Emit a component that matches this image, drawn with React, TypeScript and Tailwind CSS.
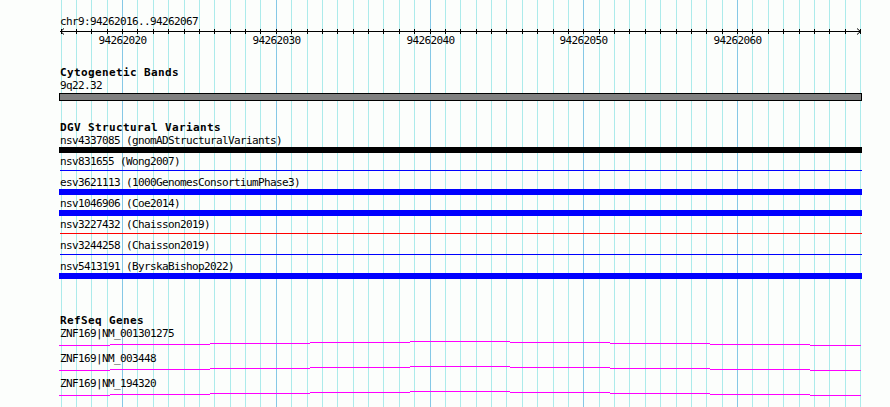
const STEP = 15.375;
const cols = Array.from({ length: 53 }, (_, i) => Math.round(60.5 + i * STEP));
const majors = [4, 14, 24, 34, 44];
const FONT = "'DejaVu Sans Mono', monospace";

const variants = [
	{ label: "nsv4337085 (gnomADStructuralVariants)", kind: "thick", color: "bg-black" },
	{ label: "nsv831655 (Wong2007)", kind: "thin", color: "bg-[#0000ff]" },
	{ label: "esv3621113 (1000GenomesConsortiumPhase3)", kind: "thick", color: "bg-[#0000ff]" },
	{ label: "nsv1046906 (Coe2014)", kind: "thick", color: "bg-[#0000ff]" },
	{ label: "nsv3227432 (Chaisson2019)", kind: "thin", color: "bg-[#ff0000]" },
	{ label: "nsv3244258 (Chaisson2019)", kind: "thin", color: "bg-[#0000ff]" },
	{ label: "nsv5413191 (ByrskaBishop2022)", kind: "thick", color: "bg-[#0000ff]" },
];

const genes = ["ZNF169|NM_001301275", "ZNF169|NM_003448", "ZNF169|NM_194320"];

// exon/intron connector steps across the view
const segX = [59, 110, 210, 310, 410, 510, 610, 710, 810, 861];
const segOff = [4, 3, 2, 1, 0, 1, 2, 3, 4];

function Grid() {
	return (
		<svg className="absolute inset-0" width={890} height={407} shapeRendering="crispEdges">
			{cols.map((x, i) => (
				<line
					key={i}
					x1={x + 0.5}
					x2={x + 0.5}
					y1={0}
					y2={407}
					stroke={majors.includes(i) ? "#85c8e6" : "#acebeb"}
				/>
			))}
		</svg>
	);
}

function Ruler() {
	return (
		<svg className="block" width={890} height={20}>
			<g shapeRendering="crispEdges">
				<line x1={60} x2={861} y1={4.5} y2={4.5} stroke="#000" />
				{cols.map((x, i) => (
					<line key={i} x1={x + 0.5} x2={x + 0.5} y1={2} y2={7} stroke="#000" />
				))}
			</g>
			<polyline points="64,1.5 60.5,4.5 64,7.5" fill="none" stroke="#000" />
			<polyline points="857,1.5 860.5,4.5 857,7.5" fill="none" stroke="#000" />
			{majors.map((i) => (
				<text
					key={i}
					x={cols[i] + 0.5}
					y={17}
					textAnchor="middle"
					fontSize={11}
					letterSpacing={-0.62}
					fontFamily={FONT}
					fill="#000"
				>
					{94262016 + i}
				</text>
			))}
		</svg>
	);
}

function GeneLine() {
	return (
		<svg className="block" width={890} height={7} shapeRendering="crispEdges">
			{segOff.map((off, i) => (
				<rect key={i} x={segX[i]} y={2 + off} width={segX[i + 1] - segX[i]} height={1} fill="#ff00ff" />
			))}
		</svg>
	);
}

export default function App() {
	return (
		<div className="relative w-[890px] h-[407px] overflow-hidden bg-[#fcfefc] text-black font-['DejaVu_Sans_Mono',monospace]">
			<Grid />
			<div className="relative pt-[17px]">
				<div className="pl-[60px] h-[10px] leading-[10px] text-[11px] tracking-[-0.62px] whitespace-pre">chr9:94262016..94262067</div>
				<Ruler />

				<div className="mt-[20px] pl-[60px] h-[12px] leading-[12px] text-[11px] tracking-[0.38px] font-bold">Cytogenetic Bands</div>
				<div className="mt-[2px] pl-[60px] h-[10px] leading-[10px] text-[11px] tracking-[-0.62px]">9q22.32</div>
				<div className="mt-[2px] ml-[59px] w-[803px] h-[8px] border border-black bg-[#808080]" />

				<div className="mt-[21px] pl-[60px] h-[12px] leading-[12px] text-[11px] tracking-[0.38px] font-bold">DGV Structural Variants</div>
				<div className="mt-[2px] flex flex-col">
					{variants.map((v) => (
						<div key={v.label} className="h-[21px] flex flex-col">
							<div className="pl-[60px] h-[10px] leading-[10px] text-[11px] tracking-[-0.62px] whitespace-pre">{v.label}</div>
							{v.kind === "thick" ? (
								<div className={`mt-[1px] ml-[59px] w-[803px] h-[6px] ${v.color}`} />
							) : (
								<div className="mt-[1px] h-[6px]">
									<div className={`mt-[2px] ml-[60px] w-[802px] h-px ${v.color}`} />
								</div>
							)}
						</div>
					))}
				</div>

				<div className="mt-[32px] pl-[60px] h-[12px] leading-[12px] text-[11px] tracking-[0.38px] font-bold">RefSeq Genes</div>
				<div className="mt-[2px] flex flex-col">
					{genes.map((g) => (
						<div key={g} className="h-[25px] flex flex-col">
							<div className="pl-[60px] h-[10px] leading-[10px] text-[11px] tracking-[-0.62px]">{g}</div>
							<GeneLine />
						</div>
					))}
				</div>
			</div>
		</div>
	);
}
